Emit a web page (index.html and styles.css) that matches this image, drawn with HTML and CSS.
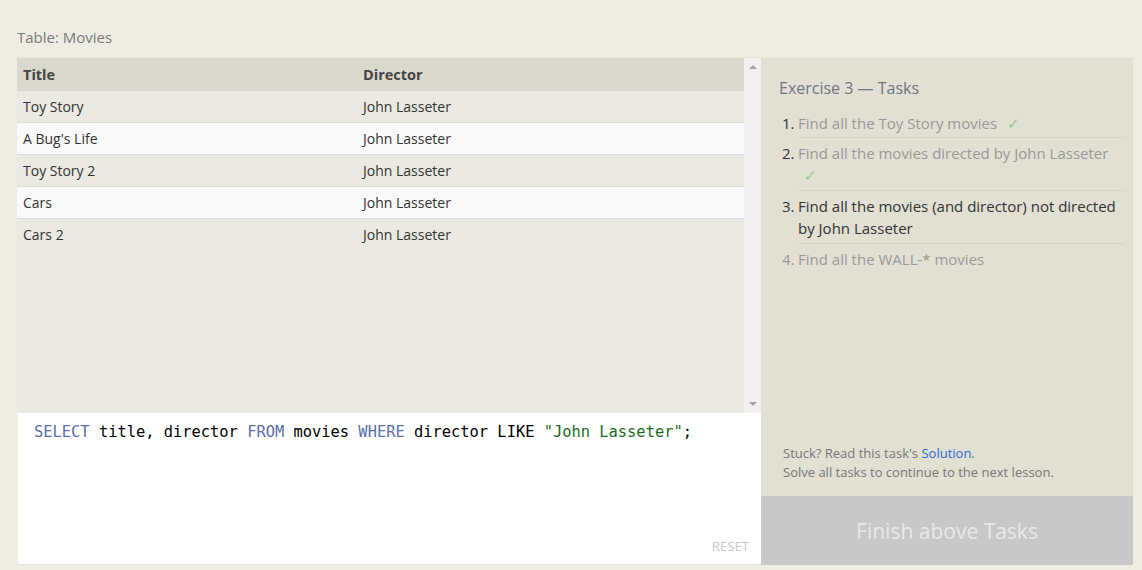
FILE: index.html
```html
<!DOCTYPE html>
<html>
<head>
<meta charset="utf-8">
<link rel="stylesheet" href="styles.css">
</head>
<body>
<div class="page">
  <div class="caption">Table: Movies</div>
  <div class="workspace">
    <div class="left">
      <div class="table-area">
        <div class="table-scroll">
          <table class="results">
            <thead>
              <tr><th class="col-title">Title</th><th>Director</th></tr>
            </thead>
            <tbody>
              <tr><td>Toy Story</td><td>John Lasseter</td></tr>
              <tr><td>A Bug's Life</td><td>John Lasseter</td></tr>
              <tr><td>Toy Story 2</td><td>John Lasseter</td></tr>
              <tr><td>Cars</td><td>John Lasseter</td></tr>
              <tr><td>Cars 2</td><td>John Lasseter</td></tr>
            </tbody>
          </table>
        </div>
        <div class="scrollbar">
          <span class="arrow up"></span>
          <span class="arrow down"></span>
        </div>
      </div>
      <div class="editor">
        <div class="code"><span class="kw">SELECT</span> title, director <span class="kw">FROM</span> movies <span class="kw">WHERE</span> director LIKE <span class="str">"John Lasseter"</span>;</div>
        <div class="reset">RESET</div>
      </div>
    </div>
    <div class="right">
      <div class="tasks">
        <h2 class="tasks-title">Exercise 3 — Tasks</h2>
        <ol class="task-list">
          <li class="done"><span class="num">1.</span><span class="txt">Find all the Toy Story movies <span class="check">✓</span></span></li>
          <li class="done"><span class="num">2.</span><span class="txt">Find all the movies directed by John Lasseter <span class="check">✓</span></span></li>
          <li class="current"><span class="num">3.</span><span class="txt">Find all the movies (and director) not directed by John Lasseter</span></li>
          <li class="todo"><span class="num">4.</span><span class="txt">Find all the WALL-* movies</span></li>
        </ol>
        <div class="help">
          <p>Stuck? Read this task's <a href="#">Solution</a>.</p>
          <p>Solve all tasks to continue to the next lesson.</p>
        </div>
      </div>
      <div class="finish">Finish above Tasks</div>
    </div>
  </div>
</div>
</body>
</html>
```
FILE: styles.css
```css
* { box-sizing: border-box; }
html, body { margin: 0; padding: 0; }
body {
  background: #efece4;
  font-family: "Open Sans", "Liberation Sans", sans-serif;
  color: #333;
  width: 1142px;
  height: 570px;
  overflow: hidden;
}
.page {
  padding: 26px 9px 0 17px;
}
.caption {
  font-size: 15px;
  line-height: 22px;
  color: #7a7a7a;
  height: 31px;
}
.workspace {
  display: flex;
  width: 1116px;
  height: 508px;
  border-top: 1px solid #e8e5dc;
}
.left {
  width: 744px;
  display: flex;
  flex-direction: column;
}
.table-area {
  height: 355px;
  display: flex;
  background: #eae9e2;
}
.table-scroll {
  flex: 1;
}
.results {
  width: 100%;
  border-collapse: collapse;
  font-size: 14px;
}
.results th {
  background: #dad9cd;
  text-align: left;
  font-weight: 700;
  font-size: 14.5px;
  color: #444;
  height: 33px;
  padding: 0 6px;
}
.results .col-title { width: 340px; }
.results td {
  padding: 5px 6px 5px;
  line-height: 21px;
  border-bottom: 1px solid #dedcd6;
  color: #333;
}
.results tbody tr:nth-child(odd) td { background: #eae9e2; }
.results tbody tr:nth-child(even) td { background: #f9f9f9; }
.results tbody tr:last-child td { border-bottom: none; }
.scrollbar {
  width: 17px;
  background: #f1f1f1;
  display: flex;
  flex-direction: column;
  justify-content: space-between;
  align-items: center;
  padding: 7px 0 7px;
}
.arrow {
  width: 0;
  height: 0;
  border-left: 4px solid transparent;
  border-right: 4px solid transparent;
}
.arrow.up { border-bottom: 4px solid #a3a3a3; }
.arrow.down { border-top: 4px solid #a3a3a3; }
.editor {
  flex: 1;
  background: #fff;
  margin-left: 1px;
  position: relative;
  padding: 9px 16px;
  border-bottom: 1px solid #e4e2da;
}
.code {
  font-family: "DejaVu Sans Mono", "Liberation Mono", monospace;
  font-size: 15.4px;
  line-height: 20px;
  color: #000;
}
.kw { color: #5a6eaa; }
.str { color: #1a6e1a; }
.reset {
  position: absolute;
  right: 12px;
  bottom: 9px;
  font-size: 13.5px;
  color: #c8c8c8;
  letter-spacing: -0.2px;
}
.right {
  width: 372px;
  display: flex;
  flex-direction: column;
}
.tasks {
  flex: 1;
  background: #e2dfd3;
  padding: 19px 8px 0 18px;
  display: flex;
  flex-direction: column;
}
.tasks-title {
  margin: 0;
  font-size: 16px;
  font-weight: 400;
  color: #6e7682;
  line-height: 22px;
}
.task-list {
  list-style: none;
  margin: 13px 0 0 0;
  padding: 0;
}
.task-list li {
  display: flex;
  font-size: 15px;
  line-height: 22px;
}
.task-list .num {
  width: 19px;
  padding-left: 3px;
  flex: none;
  color: #333;
}
.task-list .txt {
  flex: 1;
  padding-bottom: 4px;
  margin-bottom: 4px;
  border-bottom: 1px solid #d6d3c7;
}
.task-list li:nth-child(1) .txt { padding-bottom: 3px; }
.task-list li:last-child .txt { border-bottom: none; }
.done .txt { color: #999; }
.todo .num, .todo .txt { color: #9a9a9a; }
.current .txt { color: #333; }
.check {
  color: #8fca8f;
  margin-left: 6px;
}
.help {
  margin-top: auto;
  padding: 0 0 14px 4px;
  font-size: 13px;
  color: #777;
  line-height: 19px;
}
.help p { margin: 0; }
.help a { color: #2a6ad8; text-decoration: none; }
.finish {
  height: 69px;
  background: #c8c8c8;
  color: #e8e8e8;
  font-size: 21px;
  display: flex;
  align-items: center;
  justify-content: center;
}
```
